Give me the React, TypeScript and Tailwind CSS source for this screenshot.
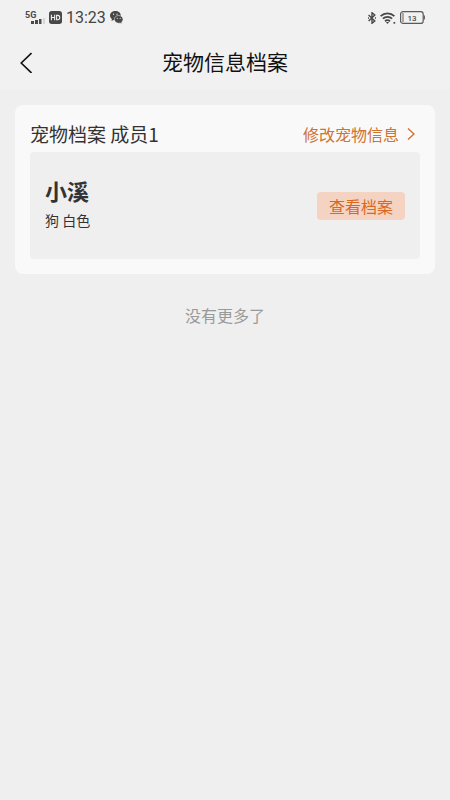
import React from "react";

const pets = [
  {
    id: 1,
    name: "小溪",
    type: "狗",
    color: "白色",
  },
];

const SignalIcon: React.FC = () => (
  <svg className="w-5 h-4" viewBox="0 0 20 16" fill="#4a4a4a">
    <text x="0" y="8" fontSize="9" fontWeight="700" fontFamily="Roboto, sans-serif">
      5G
    </text>
    <rect x="6" y="11" width="3" height="3" />
    <rect x="10" y="10" width="3" height="4" />
    <rect x="14" y="9" width="2.500" height="5" />
    <rect x="18" y="8" width="2" height="6" fill="#d6d6d6" />
  </svg>
);

const HdIcon: React.FC = () => (
  <svg className="w-[13px] h-[13px]" viewBox="0 0 12 12">
    <rect width="12" height="12" rx="2.5" fill="#484848" />
    <path
      d="M2.200 3.400v5.200M5.200 3.400v5.200M2.200 6h3M7 4v4h1.200c1 0 1.700-.6 1.700-2s-.7-2-1.700-2z"
      fill="none"
      stroke="#f1f1f1"
      strokeWidth="1"
    />
  </svg>
);

const ChatIcon: React.FC = () => (
  <svg className="w-[13px] h-[13px]" viewBox="0 0 12 12">
    <path
      d="M5 0C2.200 0 0 1.900 0 4.200c0 1.300.7 2.500 1.800 3.300L1.300 9.200l2-1c.5.1 1.100.2 1.700.2 2.800 0 5-1.900 5-4.200S7.800 0 5 0z"
      fill="#484848"
    />
    <path
      d="M8 4.100c-2.300 0-4 1.600-4 3.600s1.700 3.600 4 3.600c.5 0 1-.1 1.400-.2l1.600.8-.3-1.500c.8-.7 1.300-1.600 1.300-2.700 0-2-1.800-3.600-4-3.600z"
      fill="#484848"
      stroke="#f1f1f1"
      strokeWidth="0.5"
    />
    <g fill="#f1f1f1">
      <circle cx="3.300" cy="2.900" r="0.600" />
      <circle cx="6.500" cy="2.900" r="0.600" />
      <circle cx="6.700" cy="6.800" r="0.500" />
      <circle cx="9.400" cy="6.800" r="0.500" />
    </g>
  </svg>
);

const BluetoothIcon: React.FC = () => (
  <svg className="w-2 h-3" viewBox="0 0 8 12" fill="none" stroke="#484848" strokeWidth="1.400">
    <path d="M.6 3l6.200 6-2.800 2.300V.7L6.800 3 .6 9" />
    <path d="M0 6h1M7 6h1" />
  </svg>
);

const WifiIcon: React.FC = () => (
  <svg className="w-4 h-3" viewBox="0 0 16 12" fill="none" stroke="#484848" strokeWidth="1.800">
    <path d="M.6 4.100c3.900-3.700 9.900-3.700 13.800 0" />
    <path d="M2.900 6.700c2.600-2.400 6.600-2.400 9.200 0" />
    <path d="M5 9.200c1.500-1.300 3.500-1.300 5 0" />
    <path d="M5.900 10.100h3.200L7.500 11.900z" fill="#484848" stroke="none" />
    <rect x="13.500" y="10" width="1.700" height="1.700" fill="#484848" stroke="none" />
  </svg>
);

const BatteryIcon: React.FC = () => (
  <svg className="w-[25px] h-[13px]" viewBox="0 0 25 13">
    <rect x="0.600" y="0.600" width="22.600" height="11.800" rx="2.500" fill="none" stroke="#5a5a5a" strokeWidth="1.200" />
    <rect x="2" y="2" width="2" height="9" fill="#a8a8a8" />
    <path d="M24.300 4.500v4" stroke="#5a5a5a" strokeWidth="1.200" />
    <text x="12" y="9.500" fontSize="8" fontWeight="500" textAnchor="middle" fill="#4a4a4a" fontFamily="Roboto, sans-serif">
      13
    </text>
  </svg>
);

const StatusBar: React.FC = () => (
  <div className="flex items-center justify-between h-[35px] px-[25px]">
    <div className="flex items-center gap-1">
      <SignalIcon />
      <HdIcon />
      <span className="text-base leading-5 text-[#444444] font-[Roboto,sans-serif]">13:23</span>
      <ChatIcon />
    </div>
    <div className="flex items-center gap-1">
      <BluetoothIcon />
      <WifiIcon />
      <BatteryIcon />
    </div>
  </div>
);

const App: React.FC = () => {
  return (
    <div className="min-h-screen bg-[#efefef] font-['Noto_Sans_CJK_SC',sans-serif]">
      <header className="bg-[#f1f1f1]">
        <StatusBar />
        <div className="grid grid-cols-[1fr_auto_1fr] items-center px-5 pt-3 pb-[15px]">
          <button type="button" aria-label="返回" className="justify-self-start">
            <svg className="w-3 h-6" viewBox="0 0 12 24" fill="none" stroke="#111111" strokeWidth="1.600">
              <path d="M11.500 4L1.200 14l10.300 10" />
            </svg>
          </button>
          <h1 className="text-[21px] leading-7 text-[#111111]">宠物信息档案</h1>
        </div>
      </header>

      <main className="p-[15px]">
        <section className="rounded-lg bg-[#f9f9f9] p-[15px]">
          <div className="flex items-center justify-between pb-1">
            <h2 className="text-[19px] leading-7 text-[#333333]">宠物档案 成员{pets.length}</h2>
            <a href="#edit" className="flex items-center gap-2 pr-[5px] text-base leading-7 text-[#cf7330]">
              修改宠物信息
              <svg className="w-2 h-3" viewBox="0 0 8 12" fill="none" stroke="currentColor" strokeWidth="1.400">
                <path d="M1 .5L7 6l-6 5.500" />
              </svg>
            </a>
          </div>
          {pets.map((pet) => (
            <div key={pet.id} className="flex items-center justify-between rounded bg-[#efefef] px-[15px] py-[22px]">
              <div className="pb-[3px]">
                <h3 className="text-[22px] leading-8 font-bold text-[#333333]">{pet.name}</h3>
                <p className="text-sm leading-7 text-[#333333]">
                  {pet.type} {pet.color}
                </p>
              </div>
              <button type="button" className="rounded bg-[#f5d3c3] px-3 text-base leading-7 text-[#d9691e]">
                查看档案
              </button>
            </div>
          ))}
        </section>
        <p className="pt-[27px] text-center text-base leading-7 text-[#999999]">没有更多了</p>
      </main>
    </div>
  );
};

export default App;
